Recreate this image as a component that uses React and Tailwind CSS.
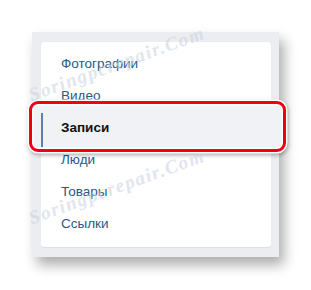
const items = ['Фотографии', 'Видео', 'Записи', 'Люди', 'Товары', 'Ссылки'];

function Watermark() {
  return (
    <div
      className="-rotate-[20deg] text-[19px] font-bold italic text-[#cdd4e4] opacity-60 tracking-[1.5px] whitespace-nowrap"
      style={{ fontFamily: '"Liberation Serif", serif' }}
    >
      Soringpcrepair.Com
    </div>
  );
}

export default function App() {
  return (
    <div className="relative w-[311px] h-[290px] bg-white overflow-hidden pt-[32px] pl-[32px]" style={{ fontFamily: '"Liberation Sans", Arial, sans-serif' }}>
      <div className="w-[247px] h-[225px] bg-[#ebedf0] pl-[9px] pr-[8px] pt-[10px] shadow-[5px_8px_12px_rgba(0,0,0,0.32)]">
        <div className="flex flex-col h-[205px] bg-white rounded-[3px] shadow-[0_1px_0_#dce1e6] py-[6px]">
          {items.map((name) =>
            name === 'Записи' ? (
              <div key={name} className="relative h-[32px]">
                <div className="absolute -left-[12px] -right-[15px] -top-[11px] -bottom-[8px] rounded-[9px] border-[3px] border-[#f00010] bg-[#f0f2f5] shadow-[0_0_0_1.5px_#fff,1px_2px_4px_1px_rgba(0,0,0,0.35),inset_0_0_0_1.5px_#fff]" />
                <div className="absolute left-0 top-[1px] w-[2px] h-[34px] bg-[#5b7fb0]" />
                <div className="relative h-full flex items-center pl-[20px] text-[13.5px] font-bold text-[#111]">{name}</div>
              </div>
            ) : (
              <div key={name} className="h-[32px] flex items-center pl-[20px] text-[13.5px] text-[#2a5885]">
                {name}
              </div>
            )
          )}
        </div>
      </div>
      <div className="absolute inset-0 pointer-events-none flex flex-col items-start pl-[24px] pt-[50px] gap-[94px]">
        <Watermark />
        <Watermark />
      </div>
    </div>
  );
}
